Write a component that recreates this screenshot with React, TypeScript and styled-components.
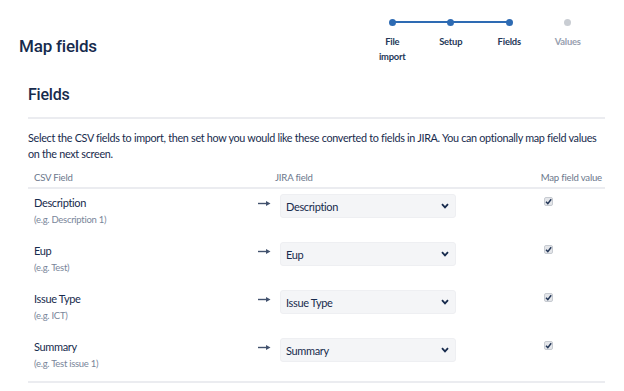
import * as React from "react"
import styled, { createGlobalStyle } from "styled-components"

const GlobalStyle = createGlobalStyle`
    html, body {
        margin: 0;
        padding: 0;
        background: #fff;
        font-family: Lato, "Noto Sans", sans-serif;
        color: #172b4d;
    }
`;

const steps = [
    { label: "File import", done: true },
    { label: "Setup", done: true },
    { label: "Fields", done: true },
    { label: "Values", done: false },
]

const rows = [
    { name: "Description", example: "Description 1" },
    { name: "Eup", example: "Test" },
    { name: "Issue Type", example: "ICT" },
    { name: "Summary", example: "Test issue 1" },
]

const Arrow = () => (
    <svg width="13" height="7" viewBox="0 0 13 7">
        <line x1="0" y1="3.5" x2="9" y2="3.5" stroke="#42526e" strokeWidth="1.4" />
        <path d="M8 1 L12.5 3.5 L8 6 Z" fill="#42526e" />
    </svg>
)

const Chevron = () => (
    <svg width="8" height="6" viewBox="0 0 8 6">
        <path d="M1 1.2 L4 4.4 L7 1.2" fill="none" stroke="#172b4d" strokeWidth="1.8" />
    </svg>
)

const CheckBox = () => (
    <Check>
        <svg width="7" height="7" viewBox="0 0 7 7">
            <path d="M1 3.8 L2.8 5.6 L6.2 1.2" fill="none" stroke="#253858" strokeWidth="1.5" />
        </svg>
    </Check>
)

const App = () => {
    return (
        <Page>
            <GlobalStyle />
            <TopBar>
                <PageTitle>Map fields</PageTitle>
                <Tracker>
                    {steps.map((s, i) => (
                        <Step key={s.label}>
                            <Track>
                                {i > 0 && <Line $on={s.done} $side="left" />}
                                {i < steps.length - 1 && <Line $on={steps[i + 1].done} $side="right" />}
                                <Dot $on={s.done} />
                            </Track>
                            <StepLabel $on={s.done}>{s.label}</StepLabel>
                        </Step>
                    ))}
                </Tracker>
            </TopBar>
            <Section>
                <Heading>Fields</Heading>
                <Intro>
                    Select the CSV fields to import, then set how you would like these converted to fields in JIRA. You can optionally map field values on the next screen.
                </Intro>
                <Table>
                    <HeadRow>
                        <HeadCell>CSV Field</HeadCell>
                        <HeadCell>JIRA field</HeadCell>
                        <HeadCell $right>Map field value</HeadCell>
                    </HeadRow>
                    {rows.map((r) => (
                        <Row key={r.name}>
                            <CsvCell>
                                <FieldName>{r.name}</FieldName>
                                <Example>(e.g. {r.example})</Example>
                            </CsvCell>
                            <ArrowCell><Arrow /></ArrowCell>
                            <Select>
                                <span>{r.name}</span>
                                <Chevron />
                            </Select>
                            <MapCell><CheckBox /></MapCell>
                        </Row>
                    ))}
                </Table>
            </Section>
        </Page>
    )
}
export default App

const Page = styled.div`
    width: 624px;
    height: 391px;
    overflow: hidden;
    box-sizing: border-box;
`;

const TopBar = styled.div`
    display: flex;
    justify-content: space-between;
    align-items: flex-start;
    padding: 16px 27px 0 19px;
    height: 68px;
    box-sizing: border-box;
`;

const PageTitle = styled.h1`
    margin: 19px 0 0;
    font-family: Roboto, Lato, sans-serif;
    font-size: 17px;
    font-weight: 500;
    letter-spacing: -0.2px;
    line-height: 22px;
    color: #172b4d;
`;

const Tracker = styled.div`
    display: flex;
`;

const Step = styled.div`
    width: 58.5px;
    display: flex;
    flex-direction: column;
    align-items: center;
`;

const Track = styled.div`
    position: relative;
    width: 100%;
    height: 12px;
    display: flex;
    justify-content: center;
    align-items: center;
`;

const Line = styled.div<{ $on: boolean; $side: string }>`
    position: absolute;
    top: 5px;
    height: 2px;
    width: 50%;
    ${(p) => (p.$side === "left" ? "left: 0;" : "right: 0;")}
    background: ${(p) => (p.$on ? "#2e6bb3" : "transparent")};
`;

const Dot = styled.div<{ $on: boolean }>`
    position: relative;
    width: 7px;
    height: 7px;
    border-radius: 50%;
    background: ${(p) => (p.$on ? "#2e6bb3" : "#c9cdd3")};
`;

const StepLabel = styled.div<{ $on: boolean }>`
    margin-top: 6px;
    width: 34px;
    text-align: center;
    font-size: 9.4px;
    letter-spacing: -0.2px;
    font-weight: 700;
    line-height: 15px;
    color: ${(p) => (p.$on ? "#253858" : "#97a0af")};
`;

const Section = styled.div`
    padding: 0 19px 0 28px;
`;

const Heading = styled.h2`
    margin: 0;
    font-family: Roboto, Lato, sans-serif;
    font-size: 16px;
    font-weight: 500;
    letter-spacing: -0.2px;
    line-height: 22px;
    padding: 16px 0 11px;
    border-bottom: 2px solid #ebecf0;
`;

const Intro = styled.p`
    margin: 11px 0 0;
    font-size: 10.8px;
    letter-spacing: -0.3px;
    line-height: 16px;
    color: #172b4d;
`;

const Table = styled.div`
    margin-top: 6px;
    border-bottom: 2px solid #ebecf0;
`;

const HeadRow = styled.div`
    display: grid;
    grid-template-columns: 241px 260px 1fr;
    height: 19px;
    align-items: center;
    border-bottom: 2px solid #ebecf0;
`;

const HeadCell = styled.div<{ $right?: boolean }>`
    font-size: 9.6px;
    letter-spacing: -0.2px;
    color: #6b778c;
    padding-left: 6px;
    text-align: ${(p) => (p.$right ? "right" : "left")};
    padding-right: ${(p) => (p.$right ? "3px" : "0")};
    white-space: nowrap;
`;

const Row = styled.div`
    display: grid;
    grid-template-columns: 226px 26px 176px 1fr;
    height: 48px;
    padding-top: 5px;
    box-sizing: border-box;
    align-items: start;
`;

const CsvCell = styled.div`
    padding-left: 6px;
    display: flex;
    flex-direction: column;
`;

const FieldName = styled.div`
    font-size: 11px;
    letter-spacing: -0.35px;
    line-height: 18px;
    color: #172b4d;
`;

const Example = styled.div`
    font-size: 9.5px;
    letter-spacing: -0.28px;
    line-height: 16px;
    color: #7a869a;
`;

const ArrowCell = styled.div`
    height: 18px;
    display: flex;
    align-items: center;
    padding-left: 4px;
`;

const Select = styled.div`
    height: 24px;
    box-sizing: border-box;
    background: #f4f5f7;
    border: 1px solid #eeeff2;
    border-radius: 3px;
    display: flex;
    align-items: center;
    justify-content: space-between;
    padding: 0 6px 0 5px;
    font-size: 11px;
    letter-spacing: -0.35px;
    color: #172b4d;
`;

const MapCell = styled.div`
    display: flex;
    padding: 3px 0 0 88px;
`;

const Check = styled.span`
    display: inline-flex;
    align-items: center;
    justify-content: center;
    width: 9px;
    height: 9px;
    box-sizing: border-box;
    background: #e4e6ea;
    border: 1px solid #c7cbd1;
    border-radius: 2px;
`;
